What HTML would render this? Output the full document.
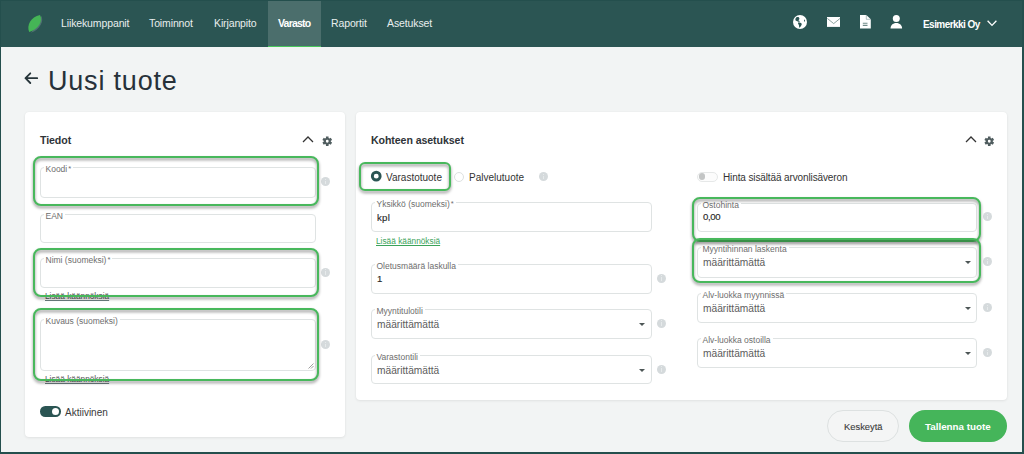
<!DOCTYPE html>
<html><head><meta charset="utf-8">
<style>
*{box-sizing:border-box;margin:0;padding:0}
html,body{width:1024px;height:454px;overflow:hidden}
body{position:relative;background:#f2f4f4;font-family:"Liberation Sans",sans-serif;color:#333}
.a{position:absolute}
.nav{left:0;top:0;width:1024px;height:47px;background:#2b5553}
.nt{position:absolute;top:18px;font-size:10.5px;line-height:11px;color:#e8eeee;letter-spacing:-0.12px;white-space:nowrap}
.tab{left:268px;top:1px;width:53px;height:46px;background:#4b6e6c;border-bottom:1.5px solid #48c65c}
.card{background:#fff;border-radius:4px;box-shadow:0 1px 3px rgba(0,0,0,0.07),0 0 1.5px rgba(0,0,0,0.05)}
.h{font-weight:bold;font-size:10.6px;color:#2f3438;white-space:nowrap;letter-spacing:-0.08px}
.fld{position:absolute;border:1px solid #dfe3e3;border-radius:4px;background:#fff}
.lbl{position:absolute;left:2.5px;top:-3.2px;padding:0 2px;background:#fff;font-size:8.5px;line-height:9px;color:#6e6e6e;white-space:nowrap}
.val{position:absolute;left:5px;font-size:10.2px;color:#5c5c5c;white-space:nowrap}
.vb{color:#2a2a2a;-webkit-text-stroke:0.15px #2a2a2a;font-size:9.6px}
.info{position:absolute;width:9px;height:9px;border-radius:50%;background:#d5dadc}
.info:after{content:"";position:absolute;left:4px;top:3.5px;width:1px;height:3.5px;background:#e6eaeb}
.info:before{content:"";position:absolute;left:4px;top:1.8px;width:1px;height:1px;background:#e6eaeb}
.grn{position:absolute;border:2.9px solid #48b85c;border-radius:8px;filter:drop-shadow(0.5px 2px 1.5px rgba(0,0,0,0.45))}
.ast{font-size:7.5px;position:relative;top:-1px;margin-left:1px}
.link{position:absolute;font-size:8.3px;text-decoration:underline;text-underline-offset:0.5px;white-space:nowrap}
.caret{position:absolute;width:0;height:0;border-left:3px solid transparent;border-right:3px solid transparent;border-top:3px solid #4d5656}
.frame{left:0;top:0;width:1024px;height:454px;border-top:1px solid #244f4d;border-left:1px solid #244f4d;border-right:2px solid #244f4d;border-bottom:2px solid #244f4d;z-index:50}
</style></head><body>

<div class="a nav"></div>
<div class="a tab"></div>
<!-- leaf -->
<svg class="a" style="left:22px;top:10px" width="26" height="26" viewBox="0 0 26 26">
<path d="M18.3 5.4 C 21.8 10.5, 17 19.5, 8 22.5 C 11 19, 17 13, 18.3 5.4 Z" fill="#8a9aa3" opacity="0.4" transform="translate(0.8,0.3)"/>
<path d="M18 4.9 C 21.3 10.5, 16.5 19.3, 7.2 22 C 4.3 15.5, 8.7 6.8, 18 4.9 Z" fill="#45b556"/>
</svg>
<div class="nt" style="left:61px">Liikekumppanit</div>
<div class="nt" style="left:149px">Toiminnot</div>
<div class="nt" style="left:214px">Kirjanpito</div>
<div class="nt" style="left:278px;font-weight:bold;color:#fff;letter-spacing:-0.8px">Varasto</div>
<div class="nt" style="left:331px">Raportit</div>
<div class="nt" style="left:387px">Asetukset</div>
<div class="nt" style="left:923px;top:18.5px;font-size:10px;font-weight:bold;color:#fff;letter-spacing:-0.55px">Esimerkki Oy</div>

<!-- title -->
<svg class="a" style="left:23px;top:71px" width="16" height="14" viewBox="0 0 16 14"><path d="M14.2 7.2H2.5M7.3 2.3L2.5 7.2L7.3 12" stroke="#27353a" stroke-width="1.8" stroke-linecap="round" stroke-linejoin="round" fill="none"/></svg>
<div class="a" style="left:48px;top:65px;font-size:27px;line-height:32px;color:#27313a;white-space:nowrap;letter-spacing:0.8px">Uusi tuote</div>

<!-- left card -->
<div class="a card" style="left:25px;top:112px;width:320px;height:325px"></div>
<div class="a h" style="left:40px;top:134px">Tiedot</div>

<div class="fld" style="left:40px;top:167px;width:276px;height:31px"><span class="lbl">Koodi<span class="ast">*</span></span></div>
<div class="fld" style="left:40px;top:214px;width:276px;height:29px"><span class="lbl">EAN</span></div>
<div class="fld" style="left:40px;top:258px;width:276px;height:30px"><span class="lbl">Nimi (suomeksi)<span class="ast">*</span></span></div>
<div class="fld" style="left:40px;top:319px;width:276px;height:52px"><span class="lbl">Kuvaus (suomeksi)</span></div>

<!-- right card -->
<div class="a card" style="left:356px;top:112px;width:651px;height:288px"></div>
<div class="a h" style="left:371px;top:134px">Kohteen asetukset</div>

<div class="fld" style="left:371px;top:202px;width:281px;height:30px"><span class="lbl">Yksikkö (suomeksi)<span class="ast">*</span></span><span class="val vb" style="top:9.2px;letter-spacing:0.3px">kpl</span></div>
<div class="fld" style="left:371px;top:264px;width:281px;height:30px"><span class="lbl">Oletusmäärä laskulla</span><span class="val vb" style="top:8px">1</span></div>
<div class="fld" style="left:371px;top:309px;width:281px;height:30px"><span class="lbl">Myyntitulotili</span><span class="val" style="top:9px">määrittämättä</span></div>
<div class="fld" style="left:371px;top:355px;width:281px;height:29px"><span class="lbl">Varastontili</span><span class="val" style="top:9px">määrittämättä</span></div>

<div class="fld" style="left:697px;top:203px;width:280px;height:29px"><span class="lbl">Ostohinta</span><span class="val vb" style="top:7px;letter-spacing:-0.4px">0,00</span></div>
<div class="fld" style="left:697px;top:247px;width:280px;height:31px"><span class="lbl">Myyntihinnan laskenta</span><span class="val" style="top:9px">määrittämättä</span></div>
<div class="fld" style="left:697px;top:293px;width:280px;height:30px"><span class="lbl">Alv-luokka myynnissä</span><span class="val" style="top:9px">määrittämättä</span></div>
<div class="fld" style="left:697px;top:338px;width:280px;height:30px"><span class="lbl">Alv-luokka ostoilla</span><span class="val" style="top:9px">määrittämättä</span></div>


<!-- nav icons -->
<svg class="a" style="left:792.5px;top:14.5px" width="14" height="14" viewBox="0 0 14 14">
<circle cx="7" cy="7" r="7" fill="#fff"/>
<path d="M3.2 2.4 C2.4 3.2 2.2 4.4 2.6 5.6 C3.2 6.2 4.2 6 4.8 6.6 C5.6 7 6.4 6.6 7 6.2 C6.4 5.8 5.6 5.8 5.4 5.2 C5.8 4.6 6.6 4.2 6.4 3.4 C6.2 2.6 5.8 2.2 5.4 2 C4.6 1.9 3.8 2 3.2 2.4 Z" fill="#2b5553"/>
<path d="M5 7.6 C4.8 8.6 5.6 9.4 6 10.4 C6.2 11.4 6 12.2 6.4 12.8 C7.2 12.2 7.8 11 8.4 10.2 C9 9.4 8.8 8.4 8 8 C7 7.6 6 7.6 5 7.6 Z" fill="#2b5553"/>
<path d="M11.2 4.6 C10.8 5.2 11 6.2 11.6 6.8 C12 6.6 12.2 6 12 5.4 C11.8 5 11.6 4.8 11.2 4.6 Z" fill="#2b5553"/>
</svg>
<svg class="a" style="left:826.5px;top:16.8px" width="13.7" height="10" viewBox="0 0 14 10" preserveAspectRatio="none">
<rect x="0" y="0" width="13.7" height="9.9" fill="#fff"/>
<path d="M0.3 1.4 L6.85 6.6 L13.4 1.4" stroke="#6f8a88" stroke-width="0.8" fill="none"/>
</svg>
<svg class="a" style="left:860px;top:14.8px" width="11" height="14" viewBox="0 0 11 14">
<path d="M0 0 H6.3 L10.8 4.3 V13.5 H0 Z" fill="#fff"/>
<path d="M6.3 0 V4.3 H10.8" fill="none" stroke="#2b5553" stroke-width="0.6" opacity="0.6"/>
<path d="M2.8 8.2 H7.5 M2.8 10.4 H7.5" stroke="#6f8a88" stroke-width="1.1"/>
</svg>
<svg class="a" style="left:890px;top:14.8px" width="13" height="14" viewBox="0 0 13 14">
<circle cx="6.3" cy="3.5" r="3.5" fill="#fff"/>
<path d="M0.5 13.5 C0.5 10.2 2.8 7.9 6.3 7.9 C9.8 7.9 12.1 10.2 12.1 13.5 Z" fill="#fff"/>
</svg>
<svg class="a" style="left:986.5px;top:20px" width="10" height="6.5" viewBox="0 0 10 6.5">
<path d="M0.6 0.7 L5 5.4 L9.4 0.7" stroke="#fff" stroke-width="1.3" fill="none"/>
</svg>

<!-- card header icons -->
<svg class="a" style="left:302px;top:136px" width="12" height="7" viewBox="0 0 12 7"><path d="M1 6 L6 1 L11 6" stroke="#333" stroke-width="1.25" fill="none"/></svg>
<svg class="a" style="left:965px;top:136px" width="12" height="7" viewBox="0 0 12 7"><path d="M1 6 L6 1 L11 6" stroke="#333" stroke-width="1.25" fill="none"/></svg>
<svg class="a" style="left:322.25px;top:135.75px" width="10.5" height="10.5" viewBox="0 0 24 24"><path fill="#505d5f" fill-rule="evenodd" d="M7.90 4.90 L9.11 4.33 L8.93 0.92 L15.07 0.92 L14.89 4.33 L16.10 4.90 L17.20 5.66 L20.06 3.80 L23.13 9.11 L20.09 10.66 L20.20 12.00 L20.09 13.34 L23.13 14.89 L20.06 20.20 L17.20 18.34 L16.10 19.10 L14.89 19.67 L15.07 23.08 L8.93 23.08 L9.11 19.67 L7.90 19.10 L6.80 18.34 L3.94 20.20 L0.87 14.89 L3.91 13.34 L3.80 12.00 L3.91 10.66 L0.87 9.11 L3.94 3.80 L6.80 5.66 Z M15.20 12 A3.20 3.20 0 1 0 8.80 12 A3.20 3.20 0 1 0 15.20 12 Z"/></svg>
<svg class="a" style="left:984.35px;top:135.75px" width="10.5" height="10.5" viewBox="0 0 24 24"><path fill="#505d5f" fill-rule="evenodd" d="M7.90 4.90 L9.11 4.33 L8.93 0.92 L15.07 0.92 L14.89 4.33 L16.10 4.90 L17.20 5.66 L20.06 3.80 L23.13 9.11 L20.09 10.66 L20.20 12.00 L20.09 13.34 L23.13 14.89 L20.06 20.20 L17.20 18.34 L16.10 19.10 L14.89 19.67 L15.07 23.08 L8.93 23.08 L9.11 19.67 L7.90 19.10 L6.80 18.34 L3.94 20.20 L0.87 14.89 L3.91 13.34 L3.80 12.00 L3.91 10.66 L0.87 9.11 L3.94 3.80 L6.80 5.66 Z M15.20 12 A3.20 3.20 0 1 0 8.80 12 A3.20 3.20 0 1 0 15.20 12 Z"/></svg>
<div class="info" style="left:320.5px;top:177.0px"></div>
<div class="info" style="left:320.5px;top:267.5px"></div>
<div class="info" style="left:320.5px;top:340.0px"></div>
<div class="info" style="left:538.5px;top:172.0px"></div>
<div class="info" style="left:656.5px;top:273.5px"></div>
<div class="info" style="left:656.5px;top:318.5px"></div>
<div class="info" style="left:656.5px;top:364.5px"></div>
<div class="info" style="left:982.5px;top:212.0px"></div>
<div class="info" style="left:982.5px;top:257.2px"></div>
<div class="info" style="left:982.5px;top:303.0px"></div>
<div class="info" style="left:982.5px;top:348.0px"></div>
<div class="caret" style="left:639.0px;top:322.5px"></div>
<div class="caret" style="left:639.0px;top:368.5px"></div>
<div class="caret" style="left:965.0px;top:261.0px"></div>
<div class="caret" style="left:965.0px;top:306.5px"></div>
<div class="caret" style="left:965.0px;top:351.5px"></div>

<!-- radios -->
<svg class="a" style="left:370px;top:170px" width="13" height="13" viewBox="0 0 13 13"><circle cx="6.25" cy="6.15" r="3.9" fill="#fff" stroke="#2b5553" stroke-width="2.9"/></svg>
<div class="a" style="left:386px;top:171.8px;font-size:10px;color:#333;white-space:nowrap">Varastotuote</div>
<div class="a" style="left:454px;top:172px;width:10px;height:10px;border-radius:50%;border:1px solid #dde1e1;background:#fff"></div>
<div class="a" style="left:469px;top:171.8px;font-size:10px;color:#333;white-space:nowrap">Palvelutuote</div>
<!-- toggle off -->
<div class="a" style="left:697px;top:171.5px;width:20.5px;height:10.3px;border-radius:5.15px;border:1px solid #e6e8e8;background:#fcfcfc"></div>
<div class="a" style="left:698.8px;top:173.3px;width:6.6px;height:6.6px;border-radius:50%;background:#c3c5c5"></div>
<div class="a" style="left:723px;top:171.8px;font-size:10px;color:#333;white-space:nowrap;letter-spacing:-0.12px">Hinta sisältää arvonlisäveron</div>
<!-- toggle on -->
<div class="a" style="left:40px;top:406px;width:21px;height:10.5px;border-radius:5.25px;background:#2b5553"></div>
<div class="a" style="left:51.5px;top:407.5px;width:7.5px;height:7.5px;border-radius:50%;background:#fff"></div>
<div class="a" style="left:65px;top:406.5px;font-size:10px;color:#3a3a3a;white-space:nowrap">Aktiivinen</div>
<!-- links -->
<div class="link" style="left:376px;top:235.5px;color:#3ba35a">Lisää käännöksiä</div>
<div class="link" style="left:45px;top:291px;color:#555;text-decoration-color:#6d7f80">Lisää käännöksiä</div>
<div class="link" style="left:45px;top:374px;color:#555;text-decoration-color:#6d7f80">Lisää käännöksiä</div>
<!-- resize handle -->
<svg class="a" style="left:308px;top:363px" width="6" height="6" viewBox="0 0 6 6"><path d="M0.5 5.5 L5.5 0.5 M3 5.5 L5.5 3" stroke="#888" stroke-width="0.8"/></svg>

<!-- buttons -->
<div class="a" style="left:827px;top:410px;width:72px;height:32px;border:1px solid #dde1e1;border-radius:16px;background:#f4f5f5"></div>
<div class="a" style="left:844px;top:420.6px;font-size:9.4px;color:#3a3a3a;-webkit-text-stroke:0.1px #3a3a3a">Keskeytä</div>
<div class="a" style="left:909px;top:410px;width:98px;height:32px;border-radius:16px;background:#45b55a"></div>
<div class="a" style="left:925px;top:420.6px;font-size:9.8px;font-weight:bold;color:#fff">Tallenna tuote</div>

<!-- annotations -->
<div class="grn" style="left:33px;top:156px;width:286px;height:49.5px"></div>
<div class="grn" style="left:33px;top:247.5px;width:286px;height:49.5px"></div>
<div class="grn" style="left:33px;top:308px;width:286px;height:72.5px"></div>
<div class="grn" style="left:359px;top:161.5px;width:92px;height:29.5px;border-radius:6px"></div>
<div class="grn" style="left:692.4px;top:196.5px;width:288.6px;height:45px"></div>
<div class="grn" style="left:692.4px;top:238px;width:288.6px;height:45px"></div>

<div class="a frame"></div>
</body></html>
